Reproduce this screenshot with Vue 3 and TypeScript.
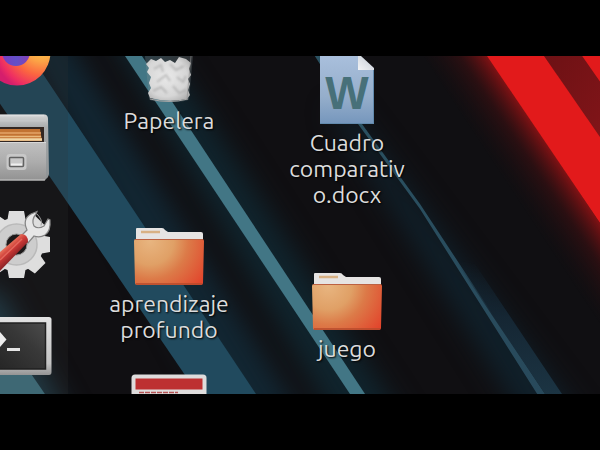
<script setup lang="ts">
type IconKind = 'trash' | 'folder' | 'pdf' | 'word'

interface DesktopItem {
  icon: IconKind
  label: string
}

const columns: { name: string; items: DesktopItem[] }[] = [
  {
    name: 'first',
    items: [
      { icon: 'trash', label: 'Papelera' },
      { icon: 'folder', label: 'aprendizaje profundo' },
      { icon: 'pdf', label: '' },
    ],
  },
  {
    name: 'second',
    items: [
      { icon: 'word', label: 'Cuadro comparativo.docx' },
      { icon: 'folder', label: 'juego' },
    ],
  },
]

const gearTeeth: number[] = [0, 45, 90, 135, 180, 225, 270, 315]
</script>

<template>
  <div class="page">
    <main class="desktop">
      <svg class="wallpaper" viewBox="0 56 600 338" preserveAspectRatio="none" aria-hidden="true">
        <defs>
          <linearGradient id="redGlow" gradientUnits="userSpaceOnUse" x1="486" y1="56" x2="440" y2="87">
            <stop offset="0" stop-color="#7a1214" />
            <stop offset=".4" stop-color="#45101280" />
            <stop offset="1" stop-color="#200f1200" />
          </linearGradient>
          <linearGradient id="darkRed" x1="0" y1="0" x2="1" y2="1">
            <stop offset="0" stop-color="#6c1114" />
            <stop offset="1" stop-color="#821519" />
          </linearGradient>
          <linearGradient id="thinLine" x1="0" y1="0" x2="0" y2="1">
            <stop offset="0" stop-color="#2b5262" />
            <stop offset="1" stop-color="#28495b" />
          </linearGradient>
          <linearGradient id="faintBand" x1="0" y1="0" x2="0" y2="1">
            <stop offset="0" stop-color="#152633" stop-opacity="0" />
            <stop offset=".4" stop-color="#152633" />
            <stop offset="1" stop-color="#1c3544" />
          </linearGradient>
          <filter id="haze" x="-20%" y="-20%" width="140%" height="140%" color-interpolation-filters="sRGB">
            <feGaussianBlur stdDeviation="13" />
          </filter>
          <filter id="soft" x="-5%" y="-5%" width="110%" height="110%" color-interpolation-filters="sRGB">
            <feGaussianBlur stdDeviation=".6" />
          </filter>
        </defs>
        <rect y="56" width="600" height="338" fill="#100f12" />
        <g filter="url(#haze)">
          <path d="M10 20 56 20 310 430 230 430Z" fill="#122632" />
          <path d="M100 20 145 20 410 430 340 430Z" fill="#10242d" />
          <path d="M330 110 350 110 590 430 530 430Z" fill="#10202a" />
          <path d="M-40 290 0 290 75 430-40 430Z" fill="#1e3c49" />
        </g>
        <g filter="url(#soft)">
          <path d="M-10 50H27L260 400H202L-10 89Z" fill="#214a5e" />
          <path d="M121 50H138L369 400H354Z" fill="#427685" />
          <path d="M-5 321 49 400H-5Z" fill="#427685" />
          <path d="M311 50H319L362 124 420 204 549 400H541L420 209 358 124Z" fill="url(#thinLine)" />
          <path d="M455 260 475 264 566 400H549Z" fill="url(#faintBand)" />
          <path d="M420 50H484L604 229V330Z" fill="url(#redGlow)" />
          <path d="M540 50H582L604 84V145Z" fill="url(#darkRed)" />
          <path d="M483 50H540L604 143V229Z" fill="#e21a1b" />
          <path d="M578 50H610V96Z" fill="#e21a1b" />
        </g>
      </svg>

      <nav class="dock" aria-label="Dock">
        <button type="button" class="launcher" aria-label="Firefox">
          <svg class="launcher-art edge" viewBox="0 56 52 42">
            <defs>
              <radialGradient id="foxBody" gradientUnits="userSpaceOnUse" cx="42" cy="44" r="50">
                <stop offset="0" stop-color="#ffd64a" />
                <stop offset=".35" stop-color="#fba446" />
                <stop offset=".62" stop-color="#fb6640" />
                <stop offset=".88" stop-color="#ee2e62" />
                <stop offset="1" stop-color="#d51e6c" />
              </radialGradient>
              <linearGradient id="foxGlobe" x1="0" y1="0" x2="1" y2="0">
                <stop offset="0" stop-color="#7a3cc0" />
                <stop offset=".5" stop-color="#6250c8" />
                <stop offset="1" stop-color="#8440b4" />
              </linearGradient>
            </defs>
            <circle cx="17" cy="52" r="33.5" fill="url(#foxBody)" />
            <circle cx="16" cy="52" r="14" fill="url(#foxGlobe)" />
          </svg>
        </button>

        <button type="button" class="launcher" aria-label="Archivos">
          <svg class="launcher-art" viewBox="0 98 52 98">
            <defs>
              <linearGradient id="cabinetTop" x1="0" y1="0" x2="0" y2="1">
                <stop offset="0" stop-color="#d5d5d5" />
                <stop offset=".2" stop-color="#a9acad" />
                <stop offset="1" stop-color="#8e9294" />
              </linearGradient>
              <linearGradient id="drawer" x1="0" y1="0" x2="0" y2="1">
                <stop offset="0" stop-color="#c0c0c0" />
                <stop offset=".5" stop-color="#adadad" />
                <stop offset="1" stop-color="#929292" />
              </linearGradient>
            </defs>
            <path d="M0 114.500H45Q48 115 48 119L49 174Q48 179 45 179H0Z" fill="url(#cabinetTop)" />
            <path d="M0 115.500H44" stroke="#dedede" stroke-width="1.500" />
            <path d="M0 120.500H46" stroke="#c5c7c8" stroke-width="2" />
            <rect y="127" width="44" height="15" fill="#322722" />
            <path d="M0 129H40L42 141H0Z" fill="#c27232" />
            <path d="M0 133H41" stroke="#e3a468" stroke-width="1.300" />
            <path d="M0 136.500H41" stroke="#e9b87c" stroke-width="1.500" />
            <path d="M0 139.500H42" stroke="#f0d5a4" stroke-width="2.500" />
            <path d="M0 142H46V178Q46 180.500 44 180.500H0Z" fill="url(#drawer)" />
            <path d="M0 142.500H46" stroke="#d8d8d8" stroke-width="1.200" />
            <path d="M0 180H45" stroke="#c8c8c8" />
            <rect x="6.500" y="154" width="20" height="16" rx="3" fill="#c8c8c8" />
            <rect x="9.500" y="157.500" width="14" height="9" rx="1" fill="#c9c9c9" stroke="#626262" stroke-width="1.500" />
            <path d="M11 164.500H22" stroke="#efefef" stroke-width="2" />
          </svg>
        </button>

        <button type="button" class="launcher" aria-label="Configuración">
          <svg class="launcher-art" viewBox="0 196 52 98">
            <defs>
              <linearGradient id="wrenchHandle" gradientUnits="userSpaceOnUse" x1="9" y1="244" x2="18" y2="254">
                <stop offset="0" stop-color="#e7705a" />
                <stop offset=".45" stop-color="#cc3936" />
                <stop offset="1" stop-color="#8e2427" />
              </linearGradient>
            </defs>
            <g fill="#dedede">
              <path
                v-for="angle in gearTeeth"
                :key="angle"
                d="M7 222 9 211H24L26 222Z"
                :transform="`rotate(${angle} 16.500 244.500)`"
              />
              <circle cx="16.500" cy="244.500" r="27" />
            </g>
            <circle cx="16.500" cy="244.500" r="20.500" fill="#cdcdcd" stroke="#bababa" stroke-width="1.500" />
            <circle cx="16.500" cy="244.500" r="10.500" fill="#1c1919" stroke="#949494" />
            <path
              d="M22 235 27 230Q22 219 31 214L37 211.500 36 214Q31 220 34 226 38 229.500 44 226L48 219 50 220Q51 231 45 235 40 238 34 236L28 243Z"
              fill="#e7e7e7"
              stroke="#858585"
              stroke-width="1.200"
            />
            <path d="M37 214Q43 220 41 225.500" stroke="#9c9c9c" fill="none" />
            <path d="M21 234Q28 234 28 242L0 271V252Z" fill="url(#wrenchHandle)" />
            <path d="M22 239 0 260" stroke="#e3675c" stroke-width="1.500" />
          </svg>
        </button>

        <button type="button" class="launcher" aria-label="Terminal">
          <svg class="launcher-art" viewBox="0 294 52 98">
            <defs>
              <linearGradient id="termFrame" x1="0" y1="0" x2="0" y2="1">
                <stop offset="0" stop-color="#e2e2e2" />
                <stop offset=".8" stop-color="#c4c4c4" />
                <stop offset="1" stop-color="#949494" />
              </linearGradient>
              <linearGradient id="termScreen" x1="0" y1="1" x2="1" y2="0">
                <stop offset="0" stop-color="#252525" />
                <stop offset=".6" stop-color="#383838" />
                <stop offset="1" stop-color="#4c4c4c" />
              </linearGradient>
            </defs>
            <path d="M0 317H49Q51.500 317 51.500 319.500V372Q51.500 375 49 375H0Z" fill="url(#termFrame)" />
            <rect x="-3" y="323" width="48.500" height="46" fill="url(#termScreen)" stroke="#202020" stroke-width="1.500" />
            <path d="M0 332 6.500 339.500 0 347Z" fill="#ededed" />
            <rect x="7" y="348" width="13" height="3" fill="#e6e6e6" />
          </svg>
        </button>
      </nav>

      <div class="icons">
        <div v-for="column in columns" :key="column.name" class="column" :class="column.name">
          <button v-for="item in column.items" :key="item.icon" type="button" class="item">
            <svg v-if="item.icon === 'trash'" class="art trash" viewBox="0 0 48 46" aria-hidden="true">
              <defs>
                <radialGradient id="paper" cx=".45" cy=".45" r=".65">
                  <stop offset="0" stop-color="#e9e9e9" />
                  <stop offset=".7" stop-color="#d6d6d6" />
                  <stop offset="1" stop-color="#b0b0b0" />
                </radialGradient>
                <filter id="crumple" color-interpolation-filters="sRGB">
                  <feGaussianBlur stdDeviation=".9" />
                </filter>
              </defs>
              <path d="M0 0H48L44 43Q43 46 24 46T4 43Z" fill="#8a9296" fill-opacity=".28" />
              <path
                d="M1 8 6 3 11 5 16 2 20 6 25 4 30 7 34 1 41 3 46 7 44 13 46 19 43 23 45 28 43 34 45 39 42 43Q24 47 5 42L3 37 6 32 4 27 6 21 2 16 4 12Z"
                fill="url(#paper)"
              />
              <path
                d="M9 13 16 9 18 16M25 8 31 14 39 10M12 26 21 19 25 25M32 21 38 26 41 20M8 35 16 31 22 37M28 30 34 37 41 34"
                fill="none"
                stroke="#9d9d9d"
                stroke-opacity=".55"
                stroke-width="2"
                filter="url(#crumple)"
              />
              <path d="M46 0 42 43" stroke="#8c8c8c" stroke-opacity=".6" />
              <path d="M5 43Q24 48 43 43" fill="none" stroke="#a5a5a5" />
            </svg>

            <svg v-else-if="item.icon === 'folder'" class="art folder" viewBox="0 0 70 58" aria-hidden="true">
              <defs>
                <radialGradient id="folderFront" gradientUnits="userSpaceOnUse" cx="16" cy="14" r="66">
                  <stop offset="0" stop-color="#e8b580" />
                  <stop offset=".36" stop-color="#e0a066" />
                  <stop offset=".58" stop-color="#dc7a48" />
                  <stop offset="1" stop-color="#e2452c" />
                </radialGradient>
              </defs>
              <path d="M2 14V2Q2 1 3 1H28Q30 1 31 3L34 5H67Q69 5 69 7V14Z" fill="#e6e4e3" />
              <path d="M7 5H26" stroke="#d8b184" stroke-width="2.500" />
              <path d="M0 14Q0 12 2 12H68Q70 12 70 14L69 56Q69 58 67 58H3Q1 58 1 56Z" fill="url(#folderFront)" />
              <path d="M1 12.500H69" stroke="#bc6142" />
              <path d="M2 57H68" stroke="#b54a2b" stroke-width="1.500" />
            </svg>

            <svg v-else-if="item.icon === 'pdf'" class="art pdf" viewBox="0 0 76 20" aria-label="Documento PDF">
              <path d="M.5 24V4Q.5.5 4 .5H72Q75.500.5 75.500 4V24Z" fill="#dedcdc" />
              <rect x="4.500" y="4.500" width="67" height="11" fill="#bd3031" />
              <path d="M8 18.500H47" stroke="#b55355" stroke-width="1.500" stroke-dasharray="5 1" />
            </svg>

            <svg v-else class="art word" viewBox="0 0 56 68" aria-hidden="true">
              <defs>
                <linearGradient id="sheet" x1="0" y1="0" x2="0" y2="1">
                  <stop offset="0" stop-color="#a9bfdc" />
                  <stop offset=".6" stop-color="#95aecb" />
                  <stop offset="1" stop-color="#7596bc" />
                </linearGradient>
                <linearGradient id="sheetFold" x1="0" y1="1" x2="1" y2="0">
                  <stop offset="0" stop-color="#f3f4f6" />
                  <stop offset="1" stop-color="#c2cad5" />
                </linearGradient>
              </defs>
              <path d="M1 0H39L55 14V68H1Z" fill="url(#sheet)" />
              <path d="M1 67.500H55M54.500 14V68" stroke="#628aad" fill="none" />
              <path d="M39 0H42L55 12V14H39Z" fill="url(#sheetFold)" />
              <text class="word-letter" x="28" y="53" text-anchor="middle">W</text>
            </svg>

            <span v-if="item.label" class="label">{{ item.label }}</span>
          </button>
        </div>
      </div>
    </main>
  </div>
</template>

<style>
body {
  margin: 0;
  background: #000;
}
</style>

<style scoped>
.page {
  display: flex;
  flex-direction: column;
  box-sizing: border-box;
  min-height: 100vh;
  padding: 56px 0;
  background: #000;
  font-family: "Ubuntu", "Noto Sans", sans-serif;
}

.desktop {
  position: relative;
  display: flex;
  flex: 1;
  overflow: hidden;
}

.wallpaper {
  position: absolute;
  inset: 0;
  width: 100%;
  height: 100%;
}

.dock {
  position: relative;
  display: flex;
  flex-direction: column;
  flex: none;
  width: 68px;
  background: rgba(50, 50, 48, 0.2);
}

button {
  margin: 0;
  padding: 0;
  border: 0;
  background: none;
  color: inherit;
  font: inherit;
}

.launcher {
  display: flex;
}

.launcher-art {
  width: 52px;
  height: 98px;
}

.launcher-art.edge {
  height: 42px;
}

.icons {
  position: relative;
  display: flex;
  padding-left: 12px;
}

.column {
  display: grid;
  width: 178px;
  justify-items: center;
  align-items: start;
}

.first {
  grid-template-rows: 171px 147px 20px;
}

.second {
  grid-template-rows: 216px 122px;
}

.item {
  display: flex;
  flex-direction: column;
  align-items: center;
  gap: 6px;
}

.art {
  display: block;
}

.trash {
  width: 48px;
  height: 46px;
}

.folder {
  width: 70px;
  height: 58px;
}

.pdf {
  width: 76px;
  height: 20px;
}

.word {
  width: 56px;
  height: 68px;
}

.word-letter {
  font-family: "Liberation Sans", Arial, sans-serif;
  font-size: 46px;
  font-weight: 700;
  fill: #477079;
}

.label {
  width: 124px;
  color: #dcdcdc;
  font-size: 23px;
  line-height: 26px;
  text-align: center;
  overflow-wrap: anywhere;
  text-shadow: 1px 1px 2px #000;
}
</style>
